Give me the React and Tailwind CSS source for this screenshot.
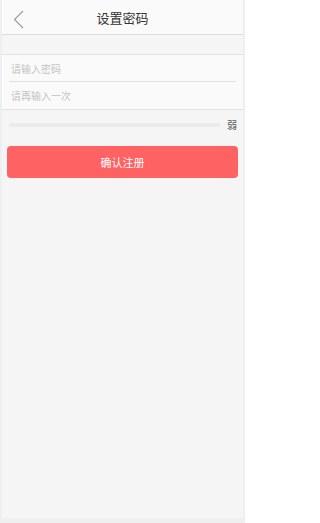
import React, { useState } from 'react';

const font = { fontFamily: '"Noto Sans CJK SC", "Liberation Sans", sans-serif' };

const App = () => {
  const [password, setPassword] = useState('');
  const [confirm, setConfirm] = useState('');

  return (
    <div className="w-[245px] h-[523px] bg-[#efefef] pb-[5px] px-[2px]" style={font}>
      <div className="h-full bg-[#f5f5f5] flex flex-col">
        {/* header */}
        <div className="h-[35px] bg-[#fafafa] border-b border-[#dddddd] flex items-center relative">
          <button className="absolute left-[9px] top-[9px] w-[14px] h-[20px] flex items-center justify-center">
            <svg width="11" height="19" viewBox="0 0 11 19" fill="none">
              <path d="M10 1L1.5 9.5L10 18" stroke="#9a9a9a" strokeWidth="1.1" />
            </svg>
          </button>
          <h1 className="w-full text-center text-[13px] text-[#333333] leading-none">设置密码</h1>
        </div>

        <div className="h-[20px] border-b border-[#e3e3e3]"></div>

        {/* inputs */}
        <div className="bg-[#fafafa] border-b border-[#e3e3e3]">
          <div className="mx-[7px] h-[27px] border-b border-[#e0e0e0] flex items-center">
            <input
              type="password"
              value={password}
              onChange={(e) => setPassword(e.target.value)}
              placeholder="请输入密码"
              className="w-full bg-transparent outline-none text-[10px] pl-[2px] placeholder:text-[#c4c4c4]"
            />
          </div>
          <div className="mx-[7px] h-[27px] flex items-center">
            <input
              type="password"
              value={confirm}
              onChange={(e) => setConfirm(e.target.value)}
              placeholder="请再输入一次"
              className="w-full bg-transparent outline-none text-[10px] pl-[2px] placeholder:text-[#c4c4c4]"
            />
          </div>
        </div>

        {/* strength */}
        <div className="flex items-center mt-[10px] pl-[7px] pr-[6px] h-[10px]">
          <div className="flex-1 h-[4px] rounded-full bg-[#ebebeb]"></div>
          <span className="ml-[7px] text-[10px] leading-none text-[#555555]">弱</span>
        </div>

        <button className="mt-[16px] mx-[5px] h-[32px] rounded-[4px] bg-[#ff6262] text-white text-[11px]">
          确认注册
        </button>
      </div>
    </div>
  );
};

export default App;
